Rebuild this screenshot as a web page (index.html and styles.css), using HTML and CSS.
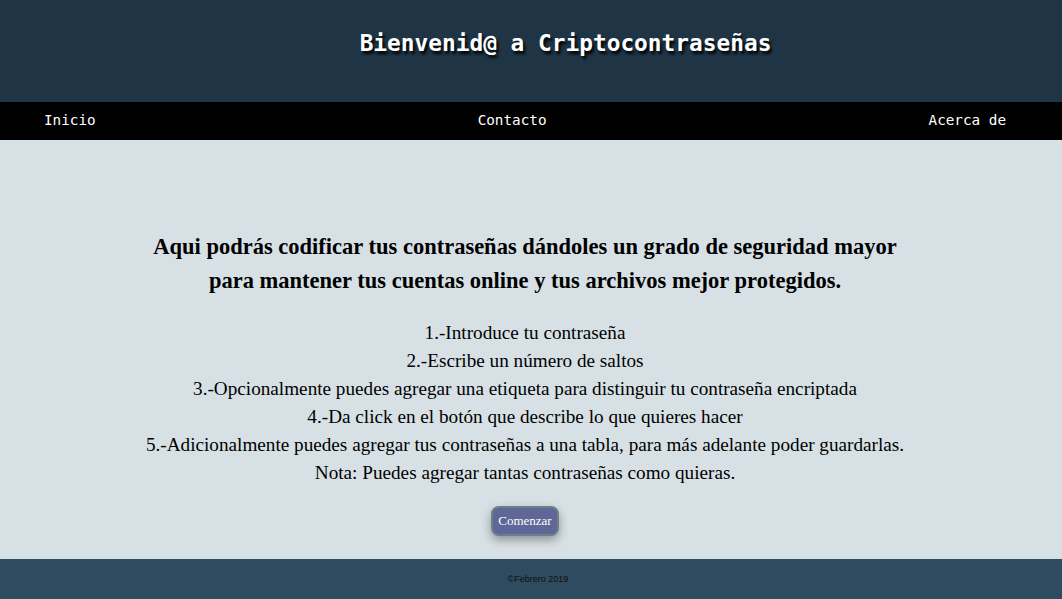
FILE: index.html
```html
<!DOCTYPE html>
<html lang="es">
<head>
<meta charset="utf-8">
<title>Criptocontraseñas</title>
<link rel="stylesheet" href="styles.css">
</head>
<body>
<header class="top">
  <h1 class="title">Bienvenid@ a Criptocontraseñas</h1>
</header>
<nav class="nav">
  <a class="nav-link" href="#">Inicio</a>
  <a class="nav-link" href="#">Contacto</a>
  <a class="nav-link" href="#">Acerca de</a>
</nav>
<main class="main">
  <h2 class="lead">Aqui podrás codificar tus contraseñas dándoles un grado de seguridad mayor<br>para mantener tus cuentas online y tus archivos mejor protegidos.</h2>
  <div class="steps">
    <p>1.-Introduce tu contraseña</p>
    <p>2.-Escribe un número de saltos</p>
    <p>3.-Opcionalmente puedes agregar una etiqueta para distinguir tu contraseña encriptada</p>
    <p>4.-Da click en el botón que describe lo que quieres hacer</p>
    <p>5.-Adicionalmente puedes agregar tus contraseñas a una tabla, para más adelante poder guardarlas.</p>
    <p>Nota: Puedes agregar tantas contraseñas como quieras.</p>
  </div>
  <div class="actions"><button class="btn">Comenzar</button></div>
</main>
<footer class="footer">©Febrero 2019</footer>
</body>
</html>
```
FILE: styles.css
```css
html, body { margin: 0; padding: 0; }
body { width: 1062px; height: 599px; overflow: hidden; display: flex; flex-direction: column; font-family: "Liberation Serif", serif; }
.top { background: #1f3546; height: 102px; display: flex; align-items: center; justify-content: center; padding: 0 0 16px 69px; box-sizing: border-box; }
.title { margin: 0; font-family: "DejaVu Sans Mono", monospace; font-weight: bold; font-size: 22.8px; color: #fff; text-shadow: 2px 3px 3px #000; }
.nav { background: #000; height: 38px; display: flex; align-items: center; justify-content: space-between; padding: 0 56px 2px 44px; box-sizing: border-box; }
.nav-link { font-family: "DejaVu Sans Mono", monospace; font-size: 14.3px; color: #fff; text-decoration: none; }
.main { background: #d7e0e5; flex: 1; display: flex; flex-direction: column; align-items: center; padding-top: 90px; padding-right: 12px; box-sizing: border-box; }
.lead { margin: 0; font-size: 22.5px; line-height: 34px; text-align: center; color: #000; }
.steps { margin-top: 21px; text-align: center; font-size: 19.2px; line-height: 28px; color: #000; }
.steps p { margin: 0; }
.actions { margin-top: 19px; }
.btn { font-family: "Liberation Serif", serif; font-size: 13px; color: #fff; background: #5e6797; border: 2px solid #6f7c89; border-radius: 8px; height: 30px; padding: 0 5px; box-shadow: 0 4px 10px rgba(0,0,0,0.35); }
.footer { background: #2e4b5f; height: 40px; display: flex; align-items: center; justify-content: center; padding-left: 14px; font-family: "Liberation Sans", sans-serif; font-size: 9px; color: #111; }
```
